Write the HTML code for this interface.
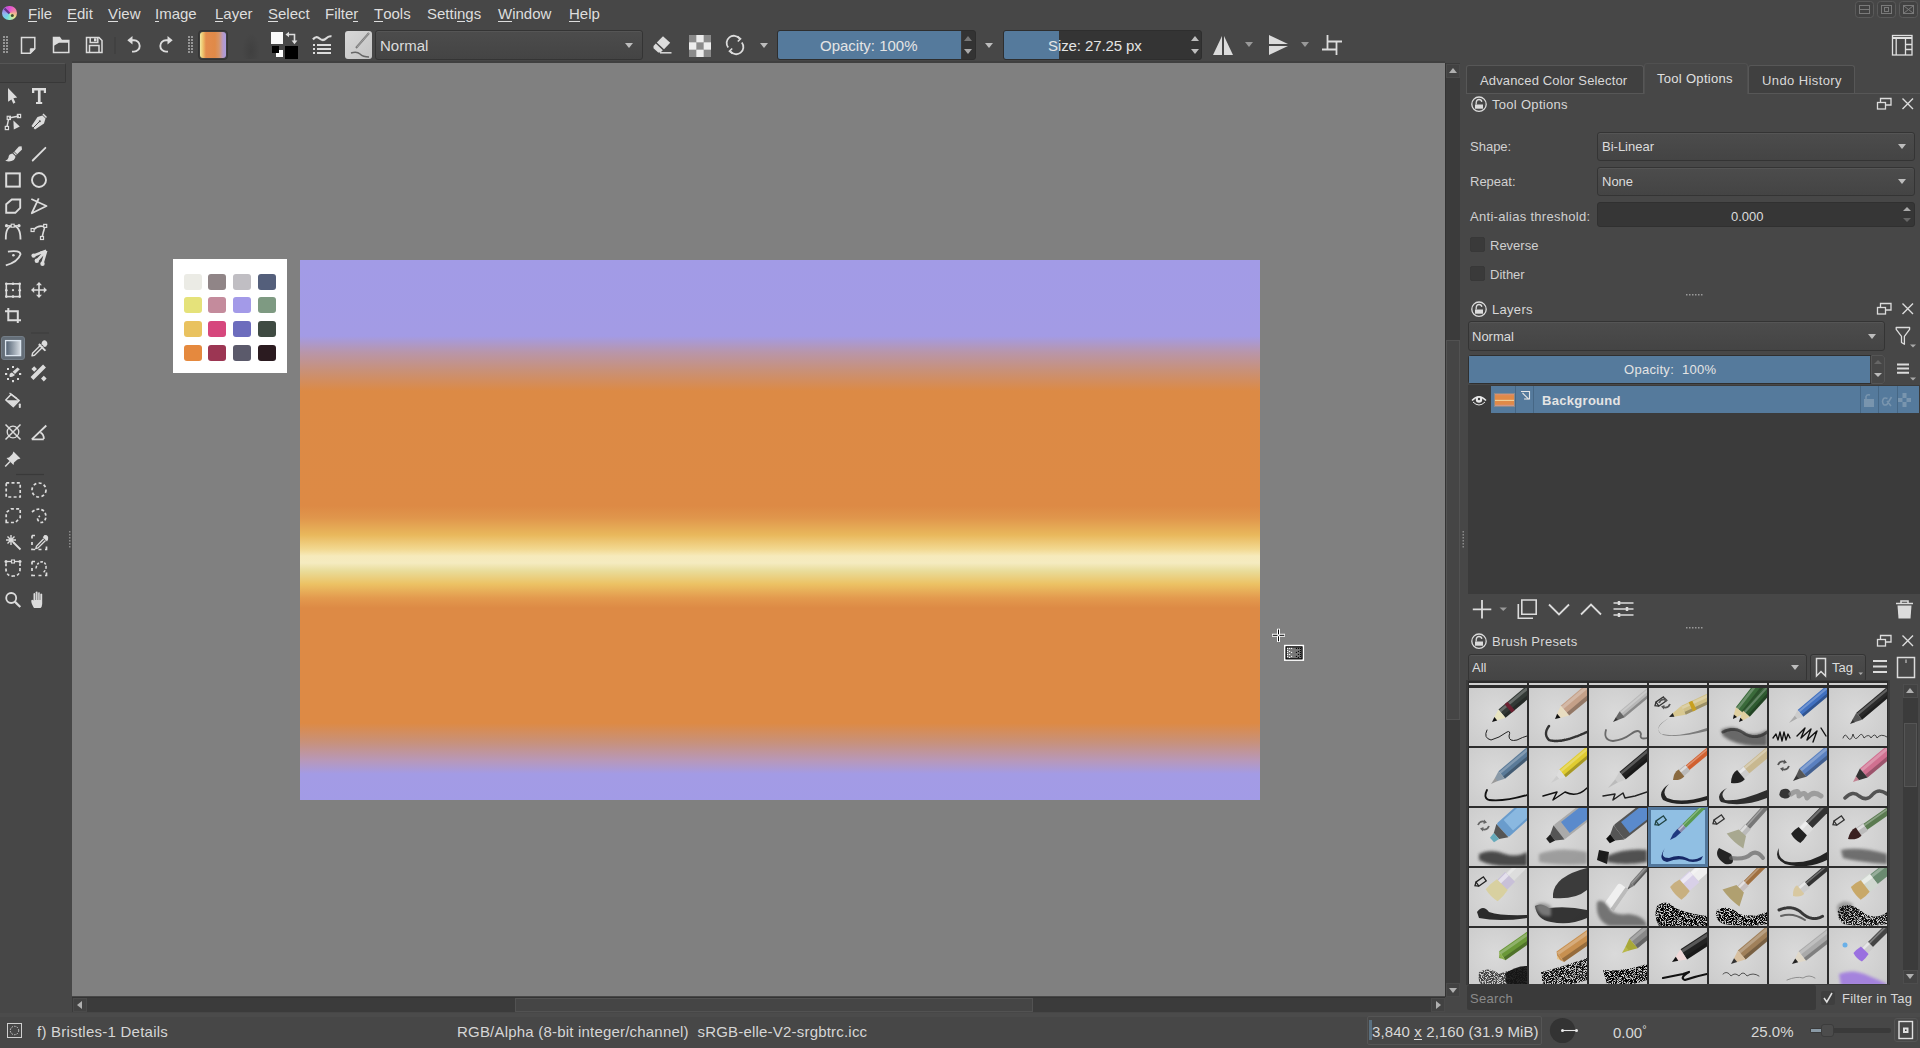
<!DOCTYPE html>
<html><head><meta charset="utf-8">
<style>
*{box-sizing:border-box;margin:0;padding:0}
html,body{width:1920px;height:1048px;overflow:hidden;background:#474747;font-family:"Liberation Sans",sans-serif;color:#d6d6d6;font-size:13px;position:relative}
.a{position:absolute}
.t{position:absolute;white-space:nowrap;line-height:1}
body>svg{position:absolute;overflow:visible}
.mb{font-size:15px;top:6px;color:#dedede}
.mb u{text-decoration:none;border-bottom:1px solid #dedede;display:inline-block;line-height:15px}
#canvas{left:72px;top:63px;width:1373px;height:933px;background:#808080}
#img{left:300px;top:260px;width:960px;height:540px;background:linear-gradient(to bottom,#a29be6 0px,#a39be5 76px,#b896ab 92px,#c8917a 110px,#dc8a45 131px,#dd8a45 246px,#e0964c 258px,#e9b85c 275px,#f2d890 289px,#f6eabb 296px,#f5ebc0 303px,#e9dc9a 311px,#ecc264 324px,#e39a4e 338px,#dd8a45 348px,#dd8a45 463px,#c8917a 482px,#b898b8 500px,#a39be5 514px,#a29be6 540px)}
#palette{left:173px;top:259px;width:114px;height:114px;background:#fff}
.sw{position:absolute;width:18px;height:16px;border-radius:3px}
.combo{position:absolute;border:1px solid #343434;border-radius:3px;background:linear-gradient(#4c4c4c,#444);box-shadow:inset 0 1px 0 #555}
.arrow{position:absolute;width:0;height:0;border-left:4.5px solid transparent;border-right:4.5px solid transparent;border-top:5px solid #bdbdbd}
.arrowu{position:absolute;width:0;height:0;border-left:4.5px solid transparent;border-right:4.5px solid transparent;border-bottom:5px solid #bdbdbd}
</style></head><body>
<!-- CANVAS -->
<div id="canvas" class="a"></div>
<div class="a" style="left:72px;top:61px;width:1373px;height:2px;background:#404040"></div>
<div id="img" class="a"></div>
<div id="palette" class="a">
<div class="sw" style="left:11px;top:15px;background:#ebebe5"></div>
<div class="sw" style="left:35px;top:15px;background:#908587"></div>
<div class="sw" style="left:60px;top:15px;background:#c0bec3"></div>
<div class="sw" style="left:85px;top:15px;background:#545f7b"></div>
<div class="sw" style="left:11px;top:38px;background:#e5e27a"></div>
<div class="sw" style="left:35px;top:38px;background:#c48b9c"></div>
<div class="sw" style="left:60px;top:38px;background:#a39ae8"></div>
<div class="sw" style="left:85px;top:38px;background:#7e9a82"></div>
<div class="sw" style="left:11px;top:62px;background:#e9c25f"></div>
<div class="sw" style="left:35px;top:62px;background:#d6477d"></div>
<div class="sw" style="left:60px;top:62px;background:#6c6cbd"></div>
<div class="sw" style="left:85px;top:62px;background:#3f4b42"></div>
<div class="sw" style="left:11px;top:86px;background:#e5893e"></div>
<div class="sw" style="left:35px;top:86px;background:#9c3653"></div>
<div class="sw" style="left:60px;top:86px;background:#5b5a6b"></div>
<div class="sw" style="left:85px;top:86px;background:#2b1b20"></div>
</div>
<!-- MENUBAR -->
<div class="a" style="left:2px;top:5.5px;width:14.5px;height:14.5px;border-radius:50%;background:conic-gradient(from 0deg,#e050d8,#f07ab0 60deg,#f0b890 100deg,#e8e890 130deg,#90e8c8 180deg,#70d8e8 215deg,#90b8f0 260deg,#9a80e0 300deg,#d050d0 340deg,#e050d8)"></div>
<svg style="left:0;top:0" width="20" height="26" viewBox="0 0 20 26"><path d="M4.5 8.5L9.5 13.5" stroke="#5a2a7a" stroke-width="2.2" opacity="0.85"/><circle cx="12.3" cy="15.5" r="1.5" fill="#1a2a1a" opacity="0.8"/></svg>
<div class="t mb" style="left:28px"><u>F</u>ile</div>
<div class="t mb" style="left:67px"><u>E</u>dit</div>
<div class="t mb" style="left:108px"><u>V</u>iew</div>
<div class="t mb" style="left:155px"><u>I</u>mage</div>
<div class="t mb" style="left:215px"><u>L</u>ayer</div>
<div class="t mb" style="left:268px"><u>S</u>elect</div>
<div class="t mb" style="left:325px">Filte<u>r</u></div>
<div class="t mb" style="left:374px"><u>T</u>ools</div>
<div class="t mb" style="left:427px">Setti<u>n</u>gs</div>
<div class="t mb" style="left:498px"><u>W</u>indow</div>
<div class="t mb" style="left:569px"><u>H</u>elp</div>
<!-- window buttons -->
<svg style="left:1854px;top:0" width="66" height="20" viewBox="0 0 66 20" fill="none" stroke="#5a5a5a">
<rect x="1.5" y="1.5" width="18" height="16" rx="3" fill="#424242"/><rect x="23.5" y="1.5" width="18" height="16" rx="3" fill="#424242"/><rect x="45.5" y="1.5" width="18" height="16" rx="3" fill="#424242"/>
<rect x="5.5" y="5.5" width="10" height="8" stroke="#7a7a7a"/><path d="M5.5 9.5h10" stroke="#7a7a7a"/>
<rect x="27.5" y="5.5" width="10" height="8" stroke="#7a7a7a"/><rect x="30.5" y="7.5" width="4" height="4" stroke="#7a7a7a"/>
<rect x="49.5" y="5.5" width="10" height="8" stroke="#7a7a7a"/><path d="M50 6l9 7M59 6l-9 7" stroke="#7a7a7a"/>
</svg>
<!-- TOOLBAR -->
<svg style="left:0;top:30px" width="380" height="33" viewBox="0 30 380 33" fill="none" stroke="#dcdcdc" stroke-width="1.5">
<g fill="#959595" stroke="none" transform="translate(0,-1)">
<rect x="3" y="37" width="2" height="2"/><rect x="6" y="37" width="2" height="2"/>
<rect x="3" y="40" width="2" height="2"/><rect x="6" y="40" width="2" height="2"/>
<rect x="3" y="43" width="2" height="2"/><rect x="6" y="43" width="2" height="2"/>
<rect x="3" y="46" width="2" height="2"/><rect x="6" y="46" width="2" height="2"/>
<rect x="3" y="49" width="2" height="2"/><rect x="6" y="49" width="2" height="2"/>
<rect x="3" y="52" width="2" height="2"/><rect x="6" y="52" width="2" height="2"/>
<rect x="188" y="37" width="2" height="2"/><rect x="191" y="37" width="2" height="2"/>
<rect x="188" y="40" width="2" height="2"/><rect x="191" y="40" width="2" height="2"/>
<rect x="188" y="43" width="2" height="2"/><rect x="191" y="43" width="2" height="2"/>
<rect x="188" y="46" width="2" height="2"/><rect x="191" y="46" width="2" height="2"/>
<rect x="188" y="49" width="2" height="2"/><rect x="191" y="49" width="2" height="2"/>
<rect x="188" y="52" width="2" height="2"/><rect x="191" y="52" width="2" height="2"/>
</g>
<!-- new -->
<path d="M21.5 37.5H34.8V48.8L30.3 53.2H21.5Z"/><path d="M34.8 48.8H30.3V53.2Z" fill="#dcdcdc" stroke-width="1"/>
<!-- open -->
<path d="M53.5 52.5V37.5H59.5L61.5 40.5H68.8V52.5Z"/><path d="M53.5 37.5H59.5L61.5 40.5H68.8V42.8H59L53.5 46Z" fill="#dcdcdc" stroke="none"/>
<!-- save -->
<path d="M86.5 37.5H99L102 40.5V52.5H86.5Z"/><path d="M90.2 37.8V42.5H97.8V37.8"/><path d="M89.5 52.5V45.5H99V52.5"/><rect x="94" y="38.3" width="2.5" height="3" fill="#dcdcdc" stroke="none"/>
<line x1="115" y1="37" x2="115" y2="54" stroke="#3c3c3c" stroke-width="1"/>
<!-- undo -->
<path d="M131.5 40.2H134A5.7 5.7 0 0 1 134 51.6H132" stroke-width="1.9"/><path d="M127.3 40.2L132.5 36V44.4Z" fill="#dcdcdc" stroke="none"/>
<!-- redo -->
<path d="M168.5 40.2H166A5.7 5.7 0 0 0 166 51.6H168" stroke-width="1.9"/><path d="M172.7 40.2L167.5 36V44.4Z" fill="#dcdcdc" stroke="none"/>
</svg>
<!-- gradient swatch -->
<div class="a" style="left:198px;top:30px;width:30px;height:30px;border:1px solid #343434;border-radius:4px;background:#3d3d3d"></div>
<div class="a" style="left:200px;top:32px;width:26px;height:26px;border-radius:3px;background:linear-gradient(to right,#f3e9a0 0px,#eec06a 3px,#e38b4d 6px,#e08a48 15px,#d79668 19px,#b89ac8 23px,#a99ce0 26px)"></div>
<div class="a" style="left:242px;top:33px;width:18px;height:26px;background:radial-gradient(ellipse at 50% 70%,#404040,#474747 70%)"></div>
<!-- fg/bg -->
<div class="a" style="left:271px;top:32px;width:12px;height:12px;background:#fafafa"></div>
<div class="a" style="left:285px;top:46px;width:13px;height:13px;background:#000"></div>
<div class="a" style="left:276px;top:50px;width:7px;height:7px;background:#fff"></div>
<div class="a" style="left:272px;top:46px;width:7px;height:7px;background:#000;border:1px solid #bbb;border-width:0 0 0 0"></div>
<svg style="left:284px;top:31px" width="16" height="16" viewBox="0 0 16 16" fill="#dcdcdc" stroke="#dcdcdc">
<path d="M1.5 3.5L5 0.8V6.2Z" stroke="none"/><path d="M4.5 3.5H10.5V10" stroke-width="1.6" fill="none"/><path d="M7.6 9.5H13.4L10.5 13.2Z" stroke="none"/>
</svg>
<!-- brush settings -->
<svg style="left:311px;top:33px" width="24" height="24" viewBox="0 0 24 24" fill="none" stroke="#dcdcdc" stroke-width="2">
<path d="M2 6.5Q5 2.5 8.5 5.5T15 5.5T20.5 3.5" stroke-width="2.2"/>
<rect x="2" y="11" width="2" height="2" fill="#dcdcdc" stroke="none"/><rect x="2" y="15" width="2" height="2" fill="#dcdcdc" stroke="none"/><rect x="2" y="19" width="2" height="2" fill="#dcdcdc" stroke="none"/>
<path d="M6 12H20M6 16H20M6 20H20" stroke-width="1.8"/>
</svg>
<!-- brush preset thumb -->
<div class="a" style="left:345px;top:31px;width:27px;height:28px;border-radius:3px;background:linear-gradient(135deg,#d8d8d8,#c4c4c4)"></div>
<svg style="left:345px;top:31px" width="27" height="28" viewBox="0 0 27 28" fill="none">
<path d="M24 2L11 17" stroke="#7a7a7a" stroke-width="2"/><path d="M24 2L12 16" stroke="#aaa" stroke-width="0.8"/>
<path d="M6 22Q12 20 15 23T24 26" stroke="#666" stroke-width="1.4"/>
</svg>
<!-- blend combo -->
<div class="combo" style="left:375px;top:30px;width:268px;height:30px"></div>
<div class="t" style="left:380px;top:38px;font-size:15px;color:#dcdcdc">Normal</div>
<div class="arrow" style="left:625px;top:43px"></div>
<!-- eraser -->
<svg style="left:650px;top:33px" width="26" height="24" viewBox="0 0 26 24">
<path d="M13 3.2L20.2 9.8L14 16.2L6.8 9.6Z" fill="#dcdcdc"/><path d="M5.8 10.6L12.8 17.2L10.5 19.6H8.2L3.5 15.2V13Z" fill="#dcdcdc"/><path d="M10 19.8H21.5" stroke="#dcdcdc" stroke-width="1.5"/>
</svg>
<!-- checker -->
<svg style="left:689px;top:35px" width="22" height="22" viewBox="0 0 21 21">
<rect width="21" height="21" fill="#8a8a8a"/><rect x="7" y="0" width="7" height="7" fill="#ececec"/><rect x="0" y="7" width="7" height="7" fill="#ececec"/><rect x="14" y="7" width="7" height="7" fill="#ececec"/><rect x="7" y="14" width="7" height="7" fill="#ececec"/>
</svg>
<!-- reload -->
<svg style="left:724px;top:34px" width="22" height="22" viewBox="0 0 22 22" fill="none" stroke="#dcdcdc" stroke-width="1.8">
<path d="M4.2 13.5A7.2 7.2 0 0 1 15.5 4.5"/><path d="M17.8 8.5A7.2 7.2 0 0 1 6.5 17.5"/><path d="M13.5 2.5L16.5 4.8L13.8 7.5" stroke-width="1.6"/><path d="M8.5 19.5L5.5 17.2L8.2 14.5" stroke-width="1.6"/>
</svg>
<div class="arrow" style="left:760px;top:43px"></div>
<!-- opacity slider -->
<div class="a" style="left:777px;top:30px;width:199px;height:30px;border:1px solid #2e2e2e;border-radius:3px;background:#333"></div>
<div class="a" style="left:778px;top:31px;width:183px;height:28px;background:#557a9c;border-radius:2px 0 0 2px"></div>
<div class="a" style="left:961px;top:31px;width:1px;height:28px;background:#3a3a3a"></div>
<div class="t" style="left:820px;top:38px;font-size:15px;color:#e4e4e4">Opacity: 100%</div>
<div class="arrowu" style="left:964px;top:36px;border-bottom-color:#777"></div>
<div class="arrow" style="left:964px;top:49px;border-top-color:#aaa"></div>
<div class="arrow" style="left:985px;top:43px"></div>
<!-- size slider -->
<div class="a" style="left:1003px;top:30px;width:199px;height:30px;border:1px solid #2e2e2e;border-radius:3px;background:#343434"></div>
<div class="a" style="left:1004px;top:31px;width:55px;height:28px;background:#557a9c;border-radius:2px 0 0 2px"></div>
<div class="t" style="left:1048px;top:38px;font-size:15px;color:#e4e4e4;letter-spacing:-0.1px">Size: 27.25 px</div>
<div class="arrowu" style="left:1191px;top:36px"></div>
<div class="arrow" style="left:1191px;top:49px"></div>
<!-- mirror -->
<svg style="left:1210px;top:33px" width="140" height="26" viewBox="1210 33 140 26" fill="#dcdcdc">
<path d="M1213 55L1222 36V55Z"/><path d="M1224 36L1233 55H1224Z"/>
<path d="M1269 35L1288 44H1269Z"/><path d="M1269 46H1288L1269 55Z"/>
<path d="M1327.5 35V49.5M1322 49.5H1337M1327.5 41.5H1342M1336.5 41.5V55" fill="none" stroke="#dcdcdc" stroke-width="1.8"/>
</svg>
<div class="arrow" style="left:1245px;top:42px;border-top-color:#999"></div>
<div class="arrow" style="left:1301px;top:42px;border-top-color:#999"></div>
<!-- layout icon -->
<svg style="left:1890px;top:33px" width="24" height="24" viewBox="0 0 24 24" fill="none" stroke="#e0e0e0" stroke-width="1.3">
<rect x="2.5" y="2.5" width="19.5" height="19.5"/><path d="M2.5 5H22" stroke-width="2"/><path d="M6.2 6V22M15.5 6V22M15.5 11.5H22M15.5 16.5H22"/>
</svg>
<!-- TOOLBOX -->
<div class="a" style="left:0;top:63px;width:66px;height:20px;background:#444;border:1px solid #383838;border-left:0;border-top-color:#555;border-radius:0 2px 2px 0"></div>
<div class="a" style="left:1px;top:336px;width:24px;height:24px;background:#646e78;border-radius:3px;border:1px solid #737d87"></div>
<svg style="left:0;top:80px" width="72" height="540" viewBox="0 80 72 540" fill="none" stroke="#dcdcdc" stroke-width="1.6">
<defs><linearGradient id="gg" x1="0" x2="1"><stop offset="0" stop-color="#4f5f70"/><stop offset="1" stop-color="#d7dde3"/></linearGradient></defs>
<!-- select shapes -->
<path d="M8 88L17.2 97.6L13.4 98.2L15.4 102.6L13.3 103.8L11.4 99.6L8.1 101.8Z" fill="#dcdcdc" stroke="none"/>
<!-- text -->
<path d="M32 88H46V93H43.8V90.6H40.6V101.9H42.2V104.1H36V101.9H37.9V90.6H34.3V93H32Z" fill="#dcdcdc" stroke="none"/>
<!-- shape edit -->
<path d="M8.8 118L19 116M8.5 119.5L7 126.5" stroke-width="1.4"/>
<rect x="7.2" y="116.3" width="3.2" height="3.2" stroke-width="1.2"/><rect x="17.4" y="114.4" width="3.2" height="3.2" stroke-width="1.2"/><rect x="5.3" y="126.4" width="3.2" height="3.2" stroke-width="1.2"/>
<path d="M13.4 120.5L19.8 126.5L13.8 129.6Z" fill="#dcdcdc" stroke="none"/>
<!-- calligraphy -->
<path d="M46.5 117.5L43 114" stroke-width="1.5"/>
<path d="M42.5 115.5L45.5 118.5L44 123.5L35 129.5L31.5 126L37.5 117Z" fill="#dcdcdc" stroke="none"/>
<path d="M32.5 128.5L39.2 121.8" stroke="#474747" stroke-width="1"/><circle cx="39.8" cy="121.2" r="1" fill="#474747" stroke="none"/>
<!-- brush -->
<path d="M21.6 146.3L22 149.5L17.2 154.2L14.4 151.4L18.9 146.4Z" fill="#dcdcdc" stroke="none"/>
<path d="M13.6 152.4L16.4 155.2" stroke-width="1.2"/>
<path d="M12.5 153.5Q8.5 154 8.5 157.5Q8 159.8 5.2 160.8Q10 162.5 13.8 160Q16 157.5 15.3 156.3Z" fill="#dcdcdc" stroke="none"/>
<!-- line -->
<path d="M32.7 160.5L45.4 147.8" stroke-width="1.8" stroke-linecap="round"/>
<!-- rect -->
<rect x="6.2" y="173.4" width="13.6" height="13.2" stroke-width="2"/>
<!-- ellipse -->
<circle cx="39" cy="180" r="7" stroke-width="1.9"/>
<!-- polygon -->
<path d="M6.2 212.8V204.2L11.8 199.5H20.2V207.8L15.3 212.8Z" stroke-width="1.9"/>
<!-- polyline -->
<path d="M31.3 199L46.5 206L31.8 213.2L38.7 198.4" stroke-width="1.8" stroke-linejoin="round"/>
<!-- bezier -->
<path d="M5.8 239.5Q5.5 226 12.7 225.9Q20.5 226 20.5 239.5" stroke-width="1.8"/>
<path d="M6.5 225.7H19.5" stroke-width="1.2"/><circle cx="6.5" cy="225.7" r="1.6" fill="#dcdcdc" stroke="none"/><circle cx="19" cy="225.7" r="1.6" fill="#dcdcdc" stroke="none"/><rect x="11.2" y="224.2" width="3" height="3" fill="#474747" stroke-width="1.1"/>
<!-- freehand path -->
<path d="M34 229.5Q38 225 43.8 226.5M44.5 228Q43 233 42.3 236.5" stroke-width="1.6"/>
<rect x="31.1" y="228.5" width="3" height="3" stroke-width="1.2"/><rect x="43.7" y="224.4" width="3" height="3" stroke-width="1.2"/><rect x="40.5" y="236.5" width="3" height="3" stroke-width="1.2"/>
<!-- dynamic brush -->
<path d="M5.8 265.3Q18 262 20.5 254.2Q20 250 7.9 251.6" stroke-width="1.8"/><circle cx="13.4" cy="255.3" r="1.3" fill="#dcdcdc" stroke="none"/>
<!-- multibrush -->
<path d="M46.2 250.6L34.5 255.3M46.2 250.6L37.5 260M46.2 250.6L42.5 263.2" stroke-width="2.6"/>
<path d="M46.2 250.6L40 251.5L45 256Z" fill="#dcdcdc" stroke="none"/>
<circle cx="33.6" cy="255.6" r="2.2" fill="#dcdcdc" stroke="none"/><circle cx="36.8" cy="260.8" r="2.2" fill="#dcdcdc" stroke="none"/><circle cx="42.5" cy="263.8" r="2.2" fill="#dcdcdc" stroke="none"/>
<!-- transform -->
<rect x="6.3" y="283.8" width="13.4" height="12.8" stroke-width="1.6"/>
<g fill="#dcdcdc" stroke="none"><circle cx="6.3" cy="283.8" r="1.3"/><circle cx="13" cy="283.8" r="1.3"/><circle cx="19.7" cy="283.8" r="1.3"/><circle cx="6.3" cy="290.2" r="1.3"/><circle cx="19.7" cy="290.2" r="1.3"/><circle cx="6.3" cy="296.6" r="1.3"/><circle cx="13" cy="296.6" r="1.3"/><circle cx="19.7" cy="296.6" r="1.3"/><circle cx="13" cy="290.2" r="1.1"/></g>
<!-- move -->
<path d="M32 290H46M39 283V297" stroke-width="1.6"/>
<path d="M31 290L34.2 287V293Z M47 290L43.8 287V293Z M39 282L36 285.2H42Z M39 298L36 294.8H42Z" fill="#dcdcdc" stroke="none"/>
<!-- crop -->
<path d="M8.3 308V320.3H21M5 311.3H17.8V323" stroke-width="2"/>
<line x1="31" y1="333" x2="49" y2="333" stroke="#3c3c3c" stroke-width="1"/>
<!-- gradient tool -->
<rect x="5.6" y="340.6" width="15" height="15" fill="url(#gg)" stroke="#dde7f0" stroke-width="1.3"/>
<!-- color picker -->
<path d="M43.3 346.5L34.5 355.3L32 355.8L32.5 353.3L41.3 344.5" stroke-width="1.4" stroke-linejoin="round"/>
<path d="M39.3 343.3L46.2 350.2L44.6 351.3L38.2 344.9Z" fill="#dcdcdc" stroke="none"/>
<path d="M41.5 344Q42 340 45 340.3Q47.8 341.5 47.3 344.5Q46.5 347 44.5 347Z" fill="#dcdcdc" stroke="none"/>
<!-- smart patch -->
<path d="M17.5 367.5L19.8 369.2L15 374L12.6 371.8Z" fill="#dcdcdc" stroke="none"/>
<path d="M12 372.5Q9 373 9.5 376.5Q11.5 378 15 375Z" fill="#dcdcdc" stroke="none"/>
<g fill="#dcdcdc" stroke="none"><rect x="5" y="373" width="2.2" height="2"/><rect x="19" y="373" width="2.2" height="2"/><rect x="12" y="380" width="2" height="2.2"/><rect x="12" y="366" width="2" height="2"/><rect x="7" y="368" width="2" height="2"/><rect x="7" y="378" width="2" height="2"/><rect x="17" y="378" width="2" height="2"/></g>
<!-- colorize -->
<path d="M32 378.5L44.5 366" stroke-width="4"/>
<path d="M34.2 366.2L37 369L34.2 371.8L31.4 369Z M43.8 375.8L46.6 378.6L43.8 381.4L41 378.6Z" fill="#dcdcdc" stroke="none"/>
<!-- fill -->
<path d="M5.8 400L11.2 394.3L19.2 400.6L13.4 406.6Z" stroke-width="1.5" stroke-linejoin="round"/>
<path d="M6.2 400.2H19L13.4 406.2Z" fill="#dcdcdc" stroke="none"/>
<path d="M9.5 393L17 398.5" stroke-width="1.3"/>
<rect x="18.8" y="403.5" width="2" height="4.5" rx="0.8" fill="#dcdcdc" stroke="none"/>
<!-- assistant -->
<circle cx="13" cy="432" r="5.8" stroke-width="1.3"/><path d="M5.5 424.5L20.5 439.5M20.5 424.5L5.5 439.5" stroke-width="1.5"/>
<!-- measure -->
<path d="M31.8 439.3H43.8M31.8 439.3L46.3 425.5M40.5 432.5Q44 434.5 43.8 439" stroke-width="1.8"/>
<!-- pin -->
<path d="M13.5 451.5L20.5 458.5L17.5 459.5L14 462.5L13.5 465L6.5 458L9 457.5L12.5 454Z" fill="#dcdcdc" stroke="none"/>
<path d="M10 461.5L5.2 466.5" stroke-width="1.5"/>
<line x1="16" y1="474.5" x2="44" y2="474.5" stroke="#393939" stroke-width="1.2"/>
<!-- rect select -->
<rect x="6.2" y="482.8" width="14" height="14.2" stroke-width="1.7" stroke-dasharray="3 2.3"/>
<!-- ellipse select -->
<circle cx="39" cy="490" r="7" stroke-width="1.7" stroke-dasharray="3 2.4"/>
<!-- polygon select -->
<path d="M6.2 522.5V512.5L11 508.8H20.2V517.5L15.5 522.5Z" stroke-width="1.7" stroke-dasharray="3 2.3"/>
<!-- freehand select -->
<path d="M32 512Q38 507 44 511Q47.5 516 44.5 521Q41 524 38.5 521Q36 518 40 516" stroke-width="1.7" stroke-dasharray="3 2"/>
<!-- magic wand -->
<path d="M11 535V545M6 540H16M7.5 536.5L14.5 543.5M14.5 536.5L7.5 543.5" stroke-width="1.4"/>
<path d="M13 542L20.5 549.5" stroke-width="1.8"/>
<!-- similar select -->
<path d="M32 535.5H35M32 535.5V538.5M32 542V545M32 548.5V549.5H35M38.5 549.5H41.5M45 549.5H46.5V546.5" stroke-width="1.7"/>
<path d="M45.5 540.5L38 548L35.8 548.6L36.4 546.4L43.7 538.8" stroke-width="1.3"/>
<path d="M42.8 537.2L47 541.4L48 539.5Q49 534.5 44.5 535Z" fill="#dcdcdc" stroke="none"/>
<!-- bezier select -->
<path d="M6 563.2V570Q7 576.5 13 576Q19.5 576 20 570V563.2" stroke-width="1.7" stroke-dasharray="3 2.2"/>
<path d="M6 561.5H20" stroke-width="1.3"/><circle cx="6" cy="561.5" r="1.5" fill="#dcdcdc" stroke="none"/><circle cx="20" cy="561.5" r="1.5" fill="#dcdcdc" stroke="none"/><rect x="11.5" y="560" width="3" height="3" fill="#474747" stroke-width="1.1"/>
<!-- magnetic select -->
<path d="M32 561.5H35M32 561.5V564.5M32 568V571M32 574.5V575.5H35M38.5 575.5H41.5M45 575.5H46.5V572.5" stroke-width="1.7"/>
<path d="M36 568.5Q37 562 42 561.8Q46.5 562.5 46 568Q45 571.5 42.5 573" stroke-width="1.5" stroke-dasharray="2.5 1.5"/>
<!-- zoom -->
<circle cx="11.2" cy="598" r="5" stroke-width="1.8"/><path d="M14.8 601.6L20.3 607" stroke-width="2.2"/>
<!-- pan -->
<path d="M34 608Q31 603 31.3 600.5Q32 598.8 33.5 600.5V593.5Q34.5 592.3 35.6 593.5V592Q36.7 590.8 37.8 592V592.8Q38.9 591.6 40 592.8V594Q41.1 592.8 42.2 594V604Q42 607 40.5 608Z" fill="#dcdcdc" stroke="none"/>
<path d="M35.6 593V600M37.8 592V600M40 593V600" stroke="#474747" stroke-width="0.6"/>
<!-- splitter grip -->
<g fill="#8a8a8a" stroke="none"><rect x="69" y="531" width="1.5" height="1.5"/><rect x="69" y="534" width="1.5" height="1.5"/><rect x="69" y="537" width="1.5" height="1.5"/><rect x="69" y="540" width="1.5" height="1.5"/><rect x="69" y="543" width="1.5" height="1.5"/><rect x="69" y="546" width="1.5" height="1.5"/></g>
</svg>
<!-- CANVAS SCROLLBARS -->
<div class="a" style="left:1445px;top:63px;width:15px;height:934px;background:#3b3b3b;border-left:1px solid #333"></div>
<div class="a" style="left:1446px;top:64px;width:14px;height:14px;background:#424242;border:1px solid #4a4a4a"></div>
<div class="arrowu" style="left:1448.5px;top:68px;border-bottom-color:#b0b0b0"></div>
<div class="a" style="left:1446px;top:340px;width:14px;height:380px;background:#454545;border:1px solid #525252"></div>
<div class="a" style="left:1446px;top:983px;width:14px;height:14px;background:#424242;border:1px solid #4a4a4a"></div>
<div class="arrow" style="left:1448.5px;top:988px;border-top-color:#b0b0b0"></div>
<div class="a" style="left:72px;top:997px;width:1373px;height:15px;background:#3b3b3b;border-top:1px solid #333"></div>
<div class="a" style="left:73px;top:998px;width:14px;height:14px;background:#424242;border:1px solid #4a4a4a"></div>
<div class="a" style="left:77px;top:1000.5px;width:0;height:0;border-top:4.5px solid transparent;border-bottom:4.5px solid transparent;border-right:5px solid #b0b0b0"></div>
<div class="a" style="left:515px;top:998px;width:518px;height:14px;background:#454545;border:1px solid #525252"></div>
<div class="a" style="left:1431px;top:998px;width:14px;height:14px;background:#424242;border:1px solid #4a4a4a"></div>
<div class="a" style="left:1436px;top:1000.5px;width:0;height:0;border-top:4.5px solid transparent;border-bottom:4.5px solid transparent;border-left:5px solid #b0b0b0"></div>
<div class="a" style="left:0;top:1013px;width:1920px;height:4px;background:#4b4b4b"></div>
<!-- DOCK splitter grip -->
<svg style="left:1460px;top:530px" width="6" height="20" viewBox="0 0 6 20"><g fill="#8a8a8a"><rect x="2.5" y="1" width="1.5" height="1.5"/><rect x="2.5" y="4" width="1.5" height="1.5"/><rect x="2.5" y="7" width="1.5" height="1.5"/><rect x="2.5" y="10" width="1.5" height="1.5"/><rect x="2.5" y="13" width="1.5" height="1.5"/><rect x="2.5" y="16" width="1.5" height="1.5"/></g></svg>
<!-- TABS -->
<div class="a" style="left:1466px;top:65px;width:178px;height:28px;background:#404040;border:1px solid #575757;border-bottom:0;border-radius:3px 3px 0 0"></div>
<div class="t" style="left:1480px;top:74px;font-size:13px;letter-spacing:0.15px;color:#d8d8d8">Advanced Color Selector</div>
<div class="a" style="left:1644px;top:63px;width:104px;height:31px;background:#474747;border:1px solid #505050;border-bottom:0;border-radius:3px 3px 0 0"></div>
<div class="t" style="left:1657px;top:72px;font-size:13px;letter-spacing:0.3px;color:#e0e0e0">Tool Options</div>
<div class="a" style="left:1748px;top:65px;width:107px;height:28px;background:#404040;border:1px solid #575757;border-bottom:0;border-radius:3px 3px 0 0"></div>
<div class="t" style="left:1762px;top:74px;font-size:13px;letter-spacing:0.4px;color:#d8d8d8">Undo History</div>
<div class="a" style="left:1466px;top:93px;width:178px;height:1px;background:#575757"></div>
<div class="a" style="left:1748px;top:93px;width:172px;height:1px;background:#575757"></div>
<!-- dock title icons -->
<svg style="left:1466px;top:94px" width="454" height="560" viewBox="1466 94 454 560" fill="none" stroke="#dcdcdc" stroke-width="1.3">
<g id="ttl">
<circle cx="1479" cy="104.2" r="7.2"/><rect x="1475" y="104.5" width="8" height="4.2" fill="#dcdcdc" stroke="none"/><path d="M1476.2 104.5V102.5Q1476.5 99.5 1479 99.5Q1481.5 99.5 1481.8 101.8"/>
<rect x="1877.5" y="102.5" width="8" height="6.5"/><path d="M1880.5 102.5V98.5H1891V105H1885.5"/>
<path d="M1902.5 98.5L1913 109M1913 98.5L1902.5 109" stroke-width="1.4"/>
</g>
<use href="#ttl" y="205"/>
<use href="#ttl" y="537"/>
</svg>
<div class="t" style="left:1492px;top:98px;font-size:13px;letter-spacing:0.3px;color:#d8d8d8">Tool Options</div>
<!-- tool options -->
<div class="t" style="left:1470px;top:140px;font-size:13px;color:#d0d0d0">Shape:</div>
<div class="t" style="left:1470px;top:175px;font-size:13px;color:#d0d0d0">Repeat:</div>
<div class="t" style="left:1470px;top:210px;font-size:13px;letter-spacing:0.3px;color:#d0d0d0">Anti-alias threshold:</div>
<div class="combo" style="left:1597px;top:132px;width:318px;height:29px"></div>
<div class="t" style="left:1602px;top:140px;font-size:13px;color:#dcdcdc">Bi-Linear</div>
<div class="arrow" style="left:1898px;top:144px"></div>
<div class="combo" style="left:1597px;top:167px;width:318px;height:29px"></div>
<div class="t" style="left:1602px;top:175px;font-size:13px;color:#dcdcdc">None</div>
<div class="arrow" style="left:1898px;top:179px"></div>
<div class="a" style="left:1597px;top:202px;width:318px;height:25px;background:#363636;border:1px solid #303030;border-radius:3px"></div>
<div class="t" style="left:1731px;top:210px;font-size:13px;color:#dcdcdc">0.000</div>
<div class="arrowu" style="left:1903px;top:207px;border-bottom-color:#aaa;border-left-width:4px;border-right-width:4px;border-bottom-width:4px"></div>
<div class="arrow" style="left:1903px;top:218px;border-top-color:#666;border-left-width:4px;border-right-width:4px;border-top-width:4px"></div>
<div class="a" style="left:1470px;top:237px;width:15px;height:15px;background:#3a3a3a;border:1px solid #383838;border-radius:2px"></div>
<div class="t" style="left:1490px;top:239px;font-size:13px;color:#d0d0d0">Reverse</div>
<div class="a" style="left:1470px;top:266px;width:15px;height:15px;background:#3a3a3a;border:1px solid #383838;border-radius:2px"></div>
<div class="t" style="left:1490px;top:268px;font-size:13px;color:#d0d0d0">Dither</div>
<svg style="left:1684px;top:293px" width="20" height="4" viewBox="0 0 20 4"><g fill="#9a9a9a"><rect x="2" y="1" width="1.5" height="1.5"/><rect x="5" y="1" width="1.5" height="1.5"/><rect x="8" y="1" width="1.5" height="1.5"/><rect x="11" y="1" width="1.5" height="1.5"/><rect x="14" y="1" width="1.5" height="1.5"/><rect x="17" y="1" width="1.5" height="1.5"/></g></svg>
<!-- LAYERS -->
<div class="t" style="left:1492px;top:303px;font-size:13px;letter-spacing:0.3px;color:#d8d8d8">Layers</div>
<div class="combo" style="left:1468px;top:321px;width:417px;height:30px"></div>
<div class="t" style="left:1472px;top:330px;font-size:13px;color:#dcdcdc">Normal</div>
<div class="arrow" style="left:1868px;top:334px"></div>
<svg style="left:1893px;top:326px" width="26" height="26" viewBox="0 0 26 26" fill="none" stroke="#dcdcdc" stroke-width="1.4">
<path d="M3.2 1.5H16.6V3.3L11.4 10.3V18.3L8.5 16.5V10.3L3.2 3.3Z" stroke-linejoin="round" stroke-width="1.3"/><path d="M17 18.5H23L20 21.5Z" fill="#aaa" stroke="none"/>
</svg>
<div class="a" style="left:1468px;top:355px;width:417px;height:29px;background:#3b3b3b;border:1px solid #2f2f2f;border-radius:3px"></div>
<div class="a" style="left:1469px;top:356px;width:401px;height:27px;background:#557a9c"></div>
<div class="t" style="left:1624px;top:363px;font-size:13px;letter-spacing:0.3px;color:#e4e4e4">Opacity:&nbsp; 100%</div>
<div class="a" style="left:1871px;top:355px;width:14px;height:29px;background:#474747;border:1px solid #555;border-radius:0 3px 3px 0"></div>
<div class="arrowu" style="left:1873.5px;top:360px;border-bottom-color:#666;border-left-width:4px;border-right-width:4px;border-bottom-width:4px"></div>
<div class="arrow" style="left:1873.5px;top:373px;border-top-color:#bbb;border-left-width:4px;border-right-width:4px;border-top-width:4px"></div>
<svg style="left:1893px;top:360px" width="26" height="24" viewBox="0 0 26 24" fill="none" stroke="#dcdcdc" stroke-width="1.8">
<path d="M4 4.5H16M4 8.5H16M4 12.8H16" stroke-width="2"/><path d="M17 17.5H23L20 20.5Z" fill="#aaa" stroke="none"/>
</svg>
<!-- layer list -->
<div class="a" style="left:1468px;top:385px;width:452px;height:209px;background:#3b3b3b"></div>
<div class="a" style="left:1491px;top:386px;width:428px;height:27px;background:#557a9c"></div>
<div class="a" style="left:1515px;top:386px;width:1px;height:27px;background:#466785"></div>
<div class="a" style="left:1533px;top:386px;width:1px;height:27px;background:#466785"></div>
<div class="a" style="left:1860px;top:386px;width:1px;height:27px;background:#466785"></div>
<div class="a" style="left:1878px;top:386px;width:1px;height:27px;background:#466785"></div>
<div class="a" style="left:1897px;top:386px;width:1px;height:27px;background:#466785"></div>
<div class="a" style="left:1494px;top:393px;width:21px;height:14px;background:linear-gradient(#d8907a 0,#e08a48 15%,#e08a48 45%,#f6e6b0 52%,#e08a48 60%,#e08a48 85%,#c89aa0 100%);border:1px solid #8a8a8a"></div>
<svg style="left:1470px;top:390px" width="450" height="22" viewBox="1470 390 450 22" fill="none">
<path d="M1472 400.5Q1479 393 1486 400.5" stroke="#e8e8e8" stroke-width="1.4"/><path d="M1473 402Q1479 408 1485 402" stroke="#e8e8e8" stroke-width="1"/>
<circle cx="1479" cy="399.5" r="3.2" fill="#e8e8e8"/><circle cx="1479" cy="399" r="1.2" fill="#3b3b3b"/>
<path d="M1521 391.5H1529.5V399.5" stroke="#e6e6e6" stroke-width="1.1"/><path d="M1522.5 393L1528.5 399" stroke="#e6e6e6" stroke-width="1.1"/><path d="M1524 399H1529" stroke="#e6e6e6" stroke-width="1.1"/>
<rect x="1864" y="399" width="10" height="8" fill="#7995ae"/><path d="M1866 399V396.5Q1867 394 1870 395" stroke="#7995ae" stroke-width="1.5"/>
<path d="M1887.5 398.5Q1883 396.5 1882.5 401.5Q1883 406.5 1887 404.5L1891.5 397M1887 401L1891 406" stroke="#7995ae" stroke-width="1.6"/>
<path d="M1904.5 393V407M1898 400H1911" stroke="#7995ae" stroke-width="4"/><rect x="1902.5" y="398" width="4" height="4" fill="#557a9c"/>
</svg>
<div class="t" style="left:1542px;top:394px;font-size:13px;font-weight:bold;letter-spacing:0.3px;color:#e4e4e4">Background</div>
<!-- layer buttons -->
<svg style="left:1466px;top:594px" width="454" height="30" viewBox="1466 594 454 30" fill="none" stroke="#dcdcdc" stroke-width="1.8">
<path d="M1482 600V618.5M1472.8 609.3H1491.3"/>
<path d="M1499.5 607.5H1507L1503.25 611Z" fill="#9a9a9a" stroke="none"/>
<path d="M1521.8 600H1536.2V614.2H1521.8Z" stroke-width="1.6"/><path d="M1518.3 604V618.2H1533" stroke-width="1.6"/>
<path d="M1549 604.5L1559 614.5L1569 604.5"/>
<path d="M1581 614.5L1591 604.5L1601 614.5"/>
<path d="M1613.5 603H1633.5M1613.5 609H1633.5M1613.5 615H1633.5" stroke-width="1.5"/>
<path d="M1619 601V605M1627 607V611M1619 613V617" stroke-width="2.5"/>
<path d="M1896 603.5H1913M1901 603.5V601H1908V603.5" stroke-width="1.6"/><path d="M1897.5 605.5H1911.5L1910.5 618.5H1898.5Z" fill="#dcdcdc" stroke="none"/>
</svg>
<svg style="left:1684px;top:626px" width="20" height="4" viewBox="0 0 20 4"><g fill="#9a9a9a"><rect x="2" y="1" width="1.5" height="1.5"/><rect x="5" y="1" width="1.5" height="1.5"/><rect x="8" y="1" width="1.5" height="1.5"/><rect x="11" y="1" width="1.5" height="1.5"/><rect x="14" y="1" width="1.5" height="1.5"/><rect x="17" y="1" width="1.5" height="1.5"/></g></svg>
<!-- BRUSH PRESETS -->
<div class="t" style="left:1492px;top:635px;font-size:13px;letter-spacing:0.3px;color:#d8d8d8">Brush Presets</div>
<div class="combo" style="left:1468px;top:654px;width:339px;height:28px"></div>
<div class="t" style="left:1472px;top:661px;font-size:13px;color:#dcdcdc">All</div>
<div class="arrow" style="left:1791px;top:665px"></div>
<div class="combo" style="left:1810px;top:654px;width:56px;height:28px"></div>
<svg style="left:1810px;top:654px" width="110" height="30" viewBox="1810 654 110 30" fill="none" stroke="#dcdcdc" stroke-width="1.5">
<path d="M1816.5 658.5H1825.5V676L1821 671.5L1816.5 676Z"/>
<path d="M1858.5 672.5H1863L1860.75 675Z" fill="#aaa" stroke="none"/>
<path d="M1873 661H1887M1873 666.5H1887M1873 672H1887" stroke-width="1.8"/>
<rect x="1897.5" y="657.5" width="17" height="20"/><path d="M1906 659.5V663" stroke-width="1"/>
</svg>
<div class="t" style="left:1832px;top:661px;font-size:13px;color:#dcdcdc">Tag</div>
<!-- TILES -->
<svg style="left:1466px;top:680px" width="424" height="305" viewBox="1466 680 424 305">
<defs><radialGradient id="tg" cx="0.45" cy="0.45" r="0.7"><stop offset="0" stop-color="#dadada"/><stop offset="1" stop-color="#cbcbcb"/></radialGradient>
<filter id="bl" x="-20%" y="-20%" width="140%" height="140%"><feGaussianBlur stdDeviation="1.5"/></filter>
<filter id="gr" x="0" y="0" width="100%" height="100%"><feTurbulence type="fractalNoise" baseFrequency="1.4" numOctaves="2" seed="5" result="n"/><feColorMatrix in="n" type="matrix" values="0 0 0 0 0  0 0 0 0 0  0 0 0 0 0  0 0 0 6 -2.3" result="m"/><feComposite in="SourceGraphic" in2="m" operator="in"/></filter>
<clipPath id="tc"><rect x="0" y="0" width="58" height="58"/></clipPath></defs>
<rect x="1466" y="680" width="424" height="305" fill="#3b3b3b"/><rect x="1468" y="681" width="420" height="303" fill="#2c2c2c"/>
<rect x="1469" y="683" width="58" height="2" fill="#cfcfcf"/>
<rect x="1529" y="683" width="58" height="2" fill="#cfcfcf"/>
<rect x="1589" y="683" width="58" height="2" fill="#cfcfcf"/>
<rect x="1649" y="683" width="58" height="2" fill="#cfcfcf"/>
<rect x="1709" y="683" width="58" height="2" fill="#cfcfcf"/>
<rect x="1769" y="683" width="58" height="2" fill="#cfcfcf"/>
<rect x="1829" y="683" width="58" height="2" fill="#cfcfcf"/>
<g transform="translate(1469,688)"><svg x="0" y="0" width="58" height="58" viewBox="0 0 58 58" overflow="hidden"><rect width="58" height="58" fill="url(#tg)"/><g transform="translate(23,34) rotate(-40)"><rect x="13" y="-5.5" width="60" height="11" fill="#333a36"/><rect x="13" y="-4.5" width="60" height="2.8" fill="#ffffff" opacity="0.25"/><rect x="13" y="2.2" width="60" height="3.3" fill="#000" opacity="0.25"/><rect x="21" y="-5.5" width="4" height="11" fill="#6a2030"/><path d="M4.5 -1.98L13 -5.5V5.5L4.5 1.98Z" fill="#e8e4c0"/><path d="M0 0L5 -2.2V2.2Z" fill="#111"/></g><path d="M18 42Q14 50 22 52Q30 50 38 44Q42 42 40 48Q40 54 48 52Q54 49 58 48" fill="none" stroke="#222" stroke-width="1.0" stroke-linecap="round" stroke-linejoin="round" opacity="1" /></svg></g>
<g transform="translate(1529,688)"><svg x="0" y="0" width="58" height="58" viewBox="0 0 58 58" overflow="hidden"><rect width="58" height="58" fill="url(#tg)"/><g transform="translate(26,31) rotate(-40)"><rect x="13" y="-6.5" width="60" height="13" fill="#c4a088"/><rect x="13" y="-5.5" width="60" height="3.2" fill="#ffffff" opacity="0.25"/><rect x="13" y="2.6" width="60" height="3.9" fill="#000" opacity="0.25"/><path d="M4.5 -2.34L13 -6.5V6.5L4.5 2.34Z" fill="#e8dcc0"/><path d="M0 0L5 -2.6V2.6Z" fill="#111"/></g><path d="M20 38Q14 46 20 52Q32 56 58 44" fill="none" stroke="#333" stroke-width="2.4" stroke-linecap="round" stroke-linejoin="round" opacity="1" stroke-dasharray="1.6 0.5"/></svg></g>
<g transform="translate(1589,688)"><svg x="0" y="0" width="58" height="58" viewBox="0 0 58 58" overflow="hidden"><rect width="58" height="58" fill="url(#tg)"/><g transform="translate(24,34) rotate(-40)"><rect x="12" y="-4.0" width="60" height="8" fill="#b8b8b8"/><rect x="12" y="-3.0" width="60" height="2.0" fill="#fff" opacity="0.25"/><rect x="12" y="1.6" width="60" height="2.4" fill="#000" opacity="0.25"/><path d="M4.5 -1.44L12 -4.0V4.0L4.5 1.44Z" fill="#666"/><path d="M0 0L5 -1.6V1.6Z" fill="#333"/></g><path d="M17 42Q14 52 24 53Q34 52 42 46Q50 40 52 46Q50 52 58 50" fill="none" stroke="#6a6a6a" stroke-width="1.8" stroke-linecap="round" stroke-linejoin="round" opacity="1" /></svg></g>
<g transform="translate(1649,688)"><svg x="0" y="0" width="58" height="58" viewBox="0 0 58 58" overflow="hidden"><rect width="58" height="58" fill="url(#tg)"/><g transform="translate(20,29) rotate(-25)"><rect x="16" y="-5.0" width="60" height="10" fill="#d0c088"/><rect x="16" y="-4.0" width="60" height="2.5" fill="#ffffff" opacity="0.25"/><rect x="16" y="2.0" width="60" height="3.0" fill="#000" opacity="0.25"/><rect x="24" y="-5.0" width="4" height="10" fill="#c8a020"/><path d="M4.5 -1.7999999999999998L16 -5.0V5.0L4.5 1.7999999999999998Z" fill="#d8c890"/><path d="M0 0L5 -2.0V2.0Z" fill="#222"/></g><path d="M20 30Q4 40 12 46Q30 50 58 40V43Q30 50 14 47Q2 40 20 30Z" fill="#666" opacity="0.8"/><g transform="translate(7,14) rotate(-35)"><rect x="0" y="0" width="9" height="5" fill="none" stroke="#333" stroke-width="1.3"/><path d="M0 0L-3 2.5L0 5" fill="none" stroke="#333" stroke-width="1.3"/></g><g fill="none" stroke="#555" stroke-width="1.8"><path d="M10 15Q12 10 17 12"/><path d="M21 16Q19 21 14 19"/></g><path d="M16 9.5L19 12.5L15.5 14Z M15 21.5L12 18.5L15.5 17Z" fill="#555"/></svg></g>
<g transform="translate(1709,688)"><svg x="0" y="0" width="58" height="58" viewBox="0 0 58 58" overflow="hidden"><rect width="58" height="58" fill="url(#tg)"/><g transform="translate(24,31) rotate(-52)"><rect x="11" y="-5.0" width="60" height="10" fill="#3a6a3a"/><rect x="11" y="-4.0" width="60" height="2.5" fill="#ffffff" opacity="0.25"/><rect x="11" y="2.0" width="60" height="3.0" fill="#000" opacity="0.25"/><path d="M3.6 -1.7999999999999998L11 -5.0V5.0L3.6 1.7999999999999998Z" fill="#e0d0a0"/><path d="M0 0L4 -2.0V2.0Z" fill="#111"/></g><g transform="translate(30,34) rotate(-48)"><rect x="11" y="-4.5" width="60" height="9" fill="#2e5a30"/><rect x="11" y="-3.5" width="60" height="2.2" fill="#ffffff" opacity="0.25"/><rect x="11" y="1.8" width="60" height="2.7" fill="#000" opacity="0.25"/><path d="M3.6 -1.6199999999999999L11 -4.5V4.5L3.6 1.6199999999999999Z" fill="#e0d0a0"/><path d="M0 0L4 -1.8V1.8Z" fill="#111"/></g><path d="M12 42Q24 36 34 44Q46 50 58 42V58H44Q24 56 14 48Z" fill="#444" opacity="0.75" filter="url(#bl)"/><path d="M14 44Q26 38 36 46Q48 52 58 44" fill="none" stroke="#222" stroke-width="3" stroke-linecap="round" stroke-linejoin="round" opacity="0.6" stroke-dasharray="1 1"/></svg></g>
<g transform="translate(1769,688)"><svg x="0" y="0" width="58" height="58" viewBox="0 0 58 58" overflow="hidden"><rect width="58" height="58" fill="url(#tg)"/><g transform="translate(20,35) rotate(-40)"><rect x="15" y="-4.5" width="60" height="9" fill="#4070c0"/><rect x="15" y="-3.5" width="60" height="2.2" fill="#ffffff" opacity="0.25"/><rect x="15" y="1.8" width="60" height="2.7" fill="#000" opacity="0.25"/><path d="M8.1 -1.6199999999999999L15 -4.5V4.5L8.1 1.6199999999999999Z" fill="#ccc"/><path d="M0 0L9 -1.8V1.8Z" fill="#aaa"/></g><path d="M4 50L7 46L9 52L11 44L13 53L15 44L17 52L19 46L21 50" fill="none" stroke="#111" stroke-width="1.3" stroke-linecap="round" stroke-linejoin="round" opacity="1" /><path d="M28 48L36 40L32 50L42 41L38 52L48 43L44 54M52 40L57 48" fill="none" stroke="#111" stroke-width="1.4" stroke-linecap="round" stroke-linejoin="round" opacity="1" /></svg></g>
<g transform="translate(1829,688)"><svg x="0" y="0" width="58" height="58" viewBox="0 0 58 58" overflow="hidden"><rect width="58" height="58" fill="url(#tg)"/><g transform="translate(21,36) rotate(-40)"><rect x="12" y="-4.5" width="60" height="9" fill="#2a2a2a"/><rect x="12" y="-3.5" width="60" height="2.2" fill="#ffffff" opacity="0.25"/><rect x="12" y="1.8" width="60" height="2.7" fill="#000" opacity="0.25"/><path d="M4.5 -1.6199999999999999L12 -4.5V4.5L4.5 1.6199999999999999Z" fill="#555"/><path d="M0 0L5 -1.8V1.8Z" fill="#333"/></g><path d="M14 50Q16 44 19 50Q22 54 24 46Q26 54 30 48Q33 44 35 50Q40 45 42 50Q46 44 48 50Q52 45 58 49" fill="none" stroke="#333" stroke-width="0.9" stroke-linecap="round" stroke-linejoin="round" opacity="1" /></svg></g>
<g transform="translate(1469,748)"><svg x="0" y="0" width="58" height="58" viewBox="0 0 58 58" overflow="hidden"><rect width="58" height="58" fill="url(#tg)"/><g transform="translate(22,36) rotate(-40)"><rect x="14" y="-5.0" width="60" height="10" fill="#5a7a98"/><rect x="14" y="-4.0" width="60" height="2.5" fill="#ffffff" opacity="0.25"/><rect x="14" y="2.0" width="60" height="3.0" fill="#000" opacity="0.25"/><path d="M6.3 -1.7999999999999998L14 -5.0V5.0L6.3 1.7999999999999998Z" fill="#8a9aa8"/><path d="M0 0L7 -2.0V2.0Z" fill="#999"/></g><path d="M18 42Q14 50 20 52Q34 54 58 47" fill="none" stroke="#111" stroke-width="1.8" stroke-linecap="round" stroke-linejoin="round" opacity="1" /></svg></g>
<g transform="translate(1529,748)"><svg x="0" y="0" width="58" height="58" viewBox="0 0 58 58" overflow="hidden"><rect width="58" height="58" fill="url(#tg)"/><g transform="translate(22,35) rotate(-40)"><rect x="15" y="-5.0" width="60" height="10" fill="#e0cc30"/><rect x="15" y="-4.0" width="60" height="2.5" fill="#ffffff" opacity="0.25"/><rect x="15" y="2.0" width="60" height="3.0" fill="#000" opacity="0.25"/><path d="M8.1 -1.7999999999999998L15 -5.0V5.0L8.1 1.7999999999999998Z" fill="#ddd"/><path d="M0 0L9 -2.0V2.0Z" fill="#ccc"/></g><path d="M14 48L28 44L24 52L36 44Q48 50 58 40" fill="none" stroke="#111" stroke-width="1.5" stroke-linecap="round" stroke-linejoin="round" opacity="1" /></svg></g>
<g transform="translate(1589,748)"><svg x="0" y="0" width="58" height="58" viewBox="0 0 58 58" overflow="hidden"><rect width="58" height="58" fill="url(#tg)"/><g transform="translate(19,40) rotate(-40)"><rect x="19" y="-5.0" width="60" height="10" fill="#222"/><rect x="19" y="-4.0" width="60" height="2.5" fill="#ffffff" opacity="0.25"/><rect x="19" y="2.0" width="60" height="3.0" fill="#000" opacity="0.25"/><path d="M9.9 -1.7999999999999998L19 -5.0V5.0L9.9 1.7999999999999998Z" fill="#ccc"/><path d="M0 0L11 -2.0V2.0Z" fill="#bbb"/></g><path d="M14 48L26 46L24 52L34 45L36 50L46 48Q52 46 58 44" fill="none" stroke="#222" stroke-width="1.5" stroke-linecap="round" stroke-linejoin="round" opacity="1" /></svg></g>
<g transform="translate(1649,748)"><svg x="0" y="0" width="58" height="58" viewBox="0 0 58 58" overflow="hidden"><rect width="58" height="58" fill="url(#tg)"/><g transform="translate(24,32) rotate(-40)"><rect x="19" y="-3.0" width="60" height="6" fill="#d06030"/><rect x="19" y="-2.2" width="60" height="1.5" fill="#fff" opacity="0.3"/><rect x="10" y="-4.0" width="9" height="8" fill="#bbb"/><rect x="10" y="-3.0" width="9" height="2.4" fill="#fff" opacity="0.5"/><path d="M0 0Q5.5 -5.3999999999999995 11 -4.5V4.5Q5.5 5.3999999999999995 0 0Z" fill="#8a6a40"/></g><path d="M20 36Q12 44 18 50Q32 56 58 48V52Q30 60 14 52Q8 44 20 36Z" fill="#111" opacity="0.9"/></svg></g>
<g transform="translate(1709,748)"><svg x="0" y="0" width="58" height="58" viewBox="0 0 58 58" overflow="hidden"><rect width="58" height="58" fill="url(#tg)"/><g transform="translate(22,35) rotate(-40)"><rect x="20" y="-4.5" width="60" height="9" fill="#c8b890"/><rect x="20" y="-3.7" width="60" height="2.2" fill="#fff" opacity="0.3"/><rect x="12" y="-5.0" width="8" height="10" fill="#ccc"/><rect x="12" y="-4.0" width="8" height="3.0" fill="#fff" opacity="0.5"/><path d="M0 0Q6.5 -7.199999999999999 13 -6.0V6.0Q6.5 7.199999999999999 0 0Z" fill="#222"/></g><path d="M18 40Q10 46 16 52Q30 54 58 42V50Q32 60 12 54Q6 46 18 40Z" fill="#111" opacity="0.85"/></svg></g>
<g transform="translate(1769,748)"><svg x="0" y="0" width="58" height="58" viewBox="0 0 58 58" overflow="hidden"><rect width="58" height="58" fill="url(#tg)"/><g transform="translate(24,33) rotate(-40)"><rect x="13" y="-5.5" width="60" height="11" fill="#5a80c0"/><rect x="13" y="-4.5" width="60" height="2.8" fill="#ffffff" opacity="0.25"/><rect x="13" y="2.2" width="60" height="3.3" fill="#000" opacity="0.25"/><path d="M5.4 -1.98L13 -5.5V5.5L5.4 1.98Z" fill="#555"/><path d="M0 0L6 -2.2V2.2Z" fill="#333"/></g><g fill="none" stroke="#555" stroke-width="1.8"><path d="M9 17Q11 12 16 14"/><path d="M20 18Q18 23 13 21"/></g><path d="M15 11.5L18 14.5L14.5 16Z M14 23.5L11 20.5L14.5 19Z" fill="#555"/><path d="M12 42Q20 38 22 46Q20 52 14 50Q8 48 12 42Z" fill="#222" opacity="0.9"/><path d="M22 46Q30 40 30 48Q36 42 38 50Q44 42 52 48" fill="none" stroke="#888" stroke-width="5" stroke-linecap="round" stroke-linejoin="round" opacity="0.7" /></svg></g>
<g transform="translate(1829,748)"><svg x="0" y="0" width="58" height="58" viewBox="0 0 58 58" overflow="hidden"><rect width="58" height="58" fill="url(#tg)"/><g transform="translate(24,34) rotate(-40)"><rect x="14" y="-6.0" width="60" height="12" fill="#d07090"/><rect x="14" y="-5.0" width="60" height="3.0" fill="#ffffff" opacity="0.25"/><rect x="14" y="2.4" width="60" height="3.6" fill="#000" opacity="0.25"/><path d="M5.4 -2.16L14 -6.0V6.0L5.4 2.16Z" fill="#333"/><path d="M0 0L6 -2.4000000000000004V2.4000000000000004Z" fill="#c08090"/></g><path d="M16 50Q24 42 30 48Q38 54 44 46Q50 40 58 46" fill="none" stroke="#333" stroke-width="3.5" stroke-linecap="round" stroke-linejoin="round" opacity="0.8" /></svg></g>
<g transform="translate(1469,808)"><svg x="0" y="0" width="58" height="58" viewBox="0 0 58 58" overflow="hidden"><rect width="58" height="58" fill="url(#tg)"/><g transform="translate(23,32) rotate(-42)"><rect x="14" y="-9.0" width="60" height="18" rx="2" fill="#6a9ccc"/><rect x="22" y="-7.0" width="40" height="14" fill="#8ab8e0"/><path d="M6 -4L14 -9.0V9.0L6 4Z" fill="#555"/><path d="M0 -3L6 -4V4L0 3Z" fill="#6ab"/></g><g fill="none" stroke="#666" stroke-width="1.8"><path d="M9 17Q11 12 16 14"/><path d="M20 18Q18 23 13 21"/></g><path d="M15 11.5L18 14.5L14.5 16Z M14 23.5L11 20.5L14.5 19Z" fill="#666"/><path d="M10 46Q22 40 36 46Q48 50 58 44V58H40Q20 58 10 52Z" fill="#333" opacity="0.85" filter="url(#bl)"/></svg></g>
<g transform="translate(1529,808)"><svg x="0" y="0" width="58" height="58" viewBox="0 0 58 58" overflow="hidden"><rect width="58" height="58" fill="url(#tg)"/><g transform="translate(19,33) rotate(-38)"><rect x="14" y="-9.0" width="60" height="18" rx="2" fill="#aaa"/><rect x="22" y="-7.0" width="40" height="14" fill="#5a8acc"/><path d="M6 -4L14 -9.0V9.0L6 4Z" fill="#555"/><path d="M0 -3L6 -4V4L0 3Z" fill="#222"/></g><path d="M10 46Q30 38 58 44V56Q30 58 10 54Z" fill="#888" opacity="0.7" filter="url(#bl)"/></svg></g>
<g transform="translate(1589,808)"><svg x="0" y="0" width="58" height="58" viewBox="0 0 58 58" overflow="hidden"><rect width="58" height="58" fill="url(#tg)"/><g transform="translate(19,33) rotate(-38)"><rect x="14" y="-9.0" width="60" height="18" rx="2" fill="#555"/><rect x="22" y="-7.0" width="40" height="14" fill="#5a8acc"/><path d="M6 -4L14 -9.0V9.0L6 4Z" fill="#555"/><path d="M0 -3L6 -4V4L0 3Z" fill="#111"/></g><path d="M10 42L20 44L18 56L8 52Z" fill="#111" opacity="0.95"/><path d="M18 48Q36 40 58 42V54Q36 58 18 54Z" fill="#333" opacity="0.8" filter="url(#bl)"/></svg></g>
<rect x="1648" y="807" width="60" height="60" fill="#52779c"/>
<rect x="1651" y="810" width="54" height="54" fill="#90bfe3"/>
<g transform="translate(1649,808)" clip-path="url(#tc)"><g transform="translate(21,32) rotate(-45)"><rect x="20" y="-2.5" width="60" height="5" fill="#5a9a50"/><rect x="20" y="-1.7" width="60" height="1.2" fill="#fff" opacity="0.3"/><rect x="12" y="-2.5" width="8" height="5" fill="#88a"/><rect x="12" y="-1.5" width="8" height="1.5" fill="#fff" opacity="0.5"/><path d="M0 0Q6.5 -3.0 13 -2.5V2.5Q6.5 3.0 0 0Z" fill="#203a80"/></g><path d="M16 40Q10 50 20 50Q30 46 38 50Q44 54 54 48L52 52Q44 56 36 52Q28 50 18 54Q8 52 16 40Z" fill="#102060" opacity="0.95"/><g transform="translate(7,13) rotate(-35)"><rect x="0" y="0" width="9" height="5" fill="none" stroke="#244" stroke-width="1.3"/><path d="M0 0L-3 2.5L0 5" fill="none" stroke="#244" stroke-width="1.3"/></g></g>
<g transform="translate(1709,808)"><svg x="0" y="0" width="58" height="58" viewBox="0 0 58 58" overflow="hidden"><rect width="58" height="58" fill="url(#tg)"/><g transform="translate(26,33) rotate(-48)"><rect x="19" y="-3.0" width="60" height="6" fill="#777"/><rect x="19" y="-2.2" width="60" height="1.5" fill="#fff" opacity="0.3"/><rect x="10" y="-4.0" width="9" height="8" fill="#bbb"/><rect x="10" y="-3.0" width="9" height="2.4" fill="#fff" opacity="0.5"/><path d="M0 -11.200000000000001L11 -4.8999999999999995V4.8999999999999995L0 11.200000000000001Q-2 0 0 -11.200000000000001Z" fill="#a8a890"/></g><g transform="translate(5,12) rotate(-35)"><rect x="0" y="0" width="9" height="5" fill="none" stroke="#333" stroke-width="1.3"/><path d="M0 0L-3 2.5L0 5" fill="none" stroke="#333" stroke-width="1.3"/></g><path d="M10 40Q4 48 16 56Q28 58 22 46Z" fill="#111" opacity="0.9"/><path d="M22 50Q36 52 42 46Q48 42 54 50" fill="none" stroke="#666" stroke-width="4" stroke-linecap="round" stroke-linejoin="round" opacity="0.7" /></svg></g>
<g transform="translate(1769,808)"><svg x="0" y="0" width="58" height="58" viewBox="0 0 58 58" overflow="hidden"><rect width="58" height="58" fill="url(#tg)"/><g transform="translate(26,31) rotate(-45)"><rect x="20" y="-4.5" width="60" height="9" fill="#333"/><rect x="20" y="-3.7" width="60" height="2.2" fill="#fff" opacity="0.3"/><rect x="10" y="-6.0" width="10" height="12" fill="#ddd"/><rect x="10" y="-5.0" width="10" height="3.6" fill="#fff" opacity="0.5"/><path d="M1 -6.5Q5.5 -7.15 11 -5.8500000000000005V5.8500000000000005Q5.5 7.15 1 6.5Q-1 0 1 -6.5Z" fill="#222"/></g><path d="M10 40Q8 52 20 54Q40 56 58 44V52Q38 62 16 56Q4 50 10 40Z" fill="#111" opacity="0.9"/></svg></g>
<g transform="translate(1829,808)"><svg x="0" y="0" width="58" height="58" viewBox="0 0 58 58" overflow="hidden"><rect width="58" height="58" fill="url(#tg)"/><g transform="translate(19,31) rotate(-35)"><rect x="21" y="-3.5" width="60" height="7" fill="#5a7a50"/><rect x="21" y="-2.7" width="60" height="1.8" fill="#fff" opacity="0.3"/><rect x="12" y="-4.5" width="9" height="9" fill="#bbb"/><rect x="12" y="-3.5" width="9" height="2.7" fill="#fff" opacity="0.5"/><path d="M0 0Q6.5 -6.0 13 -5.0V5.0Q6.5 6.0 0 0Z" fill="#3a2020"/></g><g transform="translate(5,13) rotate(-35)"><rect x="0" y="0" width="9" height="5" fill="none" stroke="#333" stroke-width="1.3"/><path d="M0 0L-3 2.5L0 5" fill="none" stroke="#333" stroke-width="1.3"/></g><path d="M12 42Q30 38 58 46V56Q30 54 14 50Z" fill="#444" opacity="0.7" filter="url(#bl)"/></svg></g>
<g transform="translate(1469,868)"><svg x="0" y="0" width="58" height="58" viewBox="0 0 58 58" overflow="hidden"><rect width="58" height="58" fill="url(#tg)"/><g transform="translate(22,28) rotate(-45)"><rect x="27" y="-5.5" width="60" height="11" fill="#ddd"/><rect x="27" y="-4.7" width="60" height="2.8" fill="#fff" opacity="0.3"/><rect x="15" y="-7.0" width="12" height="14" fill="#c8c0d8"/><rect x="15" y="-6.0" width="12" height="4.2" fill="#fff" opacity="0.5"/><path d="M1 -8.5Q8.0 -9.350000000000001 16 -7.65V7.65Q8.0 9.350000000000001 1 8.5Q-1 0 1 -8.5Z" fill="#d8d0a0"/></g><g transform="translate(7,14) rotate(-35)"><rect x="0" y="0" width="9" height="5" fill="none" stroke="#222" stroke-width="1.3"/><path d="M0 0L-3 2.5L0 5" fill="none" stroke="#222" stroke-width="1.3"/></g><path d="M8 44Q14 36 20 44Q32 48 58 47V50Q30 54 10 50Z" fill="#222" opacity="0.95"/></svg></g>
<g transform="translate(1529,868)"><svg x="0" y="0" width="58" height="58" viewBox="0 0 58 58" overflow="hidden"><rect width="58" height="58" fill="url(#tg)"/><path d="M24 26Q26 8 58 0V22Q46 32 24 30Z" fill="#333" opacity="0.95"/><path d="M6 38Q12 34 20 40Q40 38 58 42V50Q40 58 22 54Q8 52 6 38Z" fill="#222" opacity="0.9"/><path d="M6 38Q12 32 22 38L22 48Q10 50 6 38Z" fill="#888" opacity="0.8" filter="url(#bl)"/></svg></g>
<g transform="translate(1589,868)"><svg x="0" y="0" width="58" height="58" viewBox="0 0 58 58" overflow="hidden"><rect width="58" height="58" fill="url(#tg)"/><g transform="translate(38,22) rotate(-48)"><rect x="8" y="-2.5" width="60" height="5" fill="#777"/><rect x="8" y="-1.5" width="60" height="1.2" fill="#ffffff" opacity="0.25"/><rect x="8" y="1.0" width="60" height="1.5" fill="#000" opacity="0.25"/><path d="M3.6 -0.8999999999999999L8 -2.5V2.5L3.6 0.8999999999999999Z" fill="#777"/><path d="M0 0L4 -1.0V1.0Z" fill="#555"/></g><g transform="translate(28,28) rotate(-55)"><rect x="-14" y="-6" width="26" height="12" rx="3" fill="#f0f0f0"/><rect x="-14" y="2" width="26" height="4" fill="#bbb"/></g><path d="M8 34Q14 30 20 40Q24 48 40 46Q56 48 58 58H20Q6 52 8 34Z" fill="#555" opacity="0.75" filter="url(#bl)"/></svg></g>
<g transform="translate(1649,868)"><svg x="0" y="0" width="58" height="58" viewBox="0 0 58 58" overflow="hidden"><rect width="58" height="58" fill="url(#tg)"/><g transform="translate(26,26) rotate(-42)"><rect x="26" y="-6.0" width="60" height="12" fill="#eee"/><rect x="26" y="-5.2" width="60" height="3.0" fill="#fff" opacity="0.3"/><rect x="12" y="-7.5" width="14" height="15" fill="#d8d0e8"/><rect x="12" y="-6.5" width="14" height="4.5" fill="#fff" opacity="0.5"/><path d="M1 -8.5Q6.5 -9.350000000000001 13 -7.65V7.65Q6.5 9.350000000000001 1 8.5Q-1 0 1 -8.5Z" fill="#c8b080"/></g><path d="M8 38Q18 30 26 40Q40 46 58 48V58H10Q4 48 8 38Z" fill="#000" opacity="1" filter="url(#gr)"/></svg></g>
<g transform="translate(1709,868)"><svg x="0" y="0" width="58" height="58" viewBox="0 0 58 58" overflow="hidden"><rect width="58" height="58" fill="url(#tg)"/><g transform="translate(22,30) rotate(-45)"><rect x="21" y="-3.0" width="60" height="6" fill="#a07040"/><rect x="21" y="-2.2" width="60" height="1.5" fill="#fff" opacity="0.3"/><rect x="12" y="-4.0" width="9" height="8" fill="#c8c0c0"/><rect x="12" y="-3.0" width="9" height="2.4" fill="#fff" opacity="0.5"/><path d="M0 -12.0L13 -5.25V5.25L0 12.0Q-2 0 0 -12.0Z" fill="#b0a070"/></g><path d="M8 42Q20 36 30 46Q44 50 58 44V56Q40 60 14 56Q4 50 8 42Z" fill="#000" opacity="1" filter="url(#gr)"/></svg></g>
<g transform="translate(1769,868)"><svg x="0" y="0" width="58" height="58" viewBox="0 0 58 58" overflow="hidden"><rect width="58" height="58" fill="url(#tg)"/><g transform="translate(24,28) rotate(-40)"><rect x="18" y="-3.0" width="60" height="6" fill="#333"/><rect x="18" y="-2.2" width="60" height="1.5" fill="#fff" opacity="0.3"/><rect x="9" y="-4.5" width="9" height="9" fill="#ccc"/><rect x="9" y="-3.5" width="9" height="2.7" fill="#fff" opacity="0.5"/><path d="M0 0Q5.0 -6.6 10 -5.5V5.5Q5.0 6.6 0 0Z" fill="#d8c8a0"/></g><path d="M10 42Q24 36 34 46Q44 54 54 48" fill="none" stroke="#111" stroke-width="3" stroke-linecap="round" stroke-linejoin="round" opacity="0.8" stroke-dasharray="2 1"/><path d="M12 48Q24 44 36 52" fill="none" stroke="#333" stroke-width="2" stroke-linecap="round" stroke-linejoin="round" opacity="0.7" /></svg></g>
<g transform="translate(1829,868)"><svg x="0" y="0" width="58" height="58" viewBox="0 0 58 58" overflow="hidden"><rect width="58" height="58" fill="url(#tg)"/><g transform="translate(26,26) rotate(-38)"><rect x="24" y="-6.0" width="60" height="12" fill="#6a8a70"/><rect x="24" y="-5.2" width="60" height="3.0" fill="#fff" opacity="0.3"/><rect x="12" y="-7.5" width="12" height="15" fill="#d0d8d0"/><rect x="12" y="-6.5" width="12" height="4.5" fill="#fff" opacity="0.5"/><path d="M1 -8.0Q6.5 -8.8 13 -7.2V7.2Q6.5 8.8 1 8.0Q-1 0 1 -8.0Z" fill="#c8a868"/></g><path d="M8 38Q14 30 24 36L20 50Q8 50 8 38Z" fill="#777" opacity="0.6" filter="url(#bl)"/><path d="M10 40Q20 32 36 46Q48 52 58 44V56Q36 60 14 56Q6 48 10 40Z" fill="#111" opacity="1" filter="url(#gr)"/></svg></g>
<g transform="translate(1469,928)"><svg x="0" y="0" width="58" height="56" viewBox="0 0 58 56" overflow="hidden"><rect width="58" height="58" fill="url(#tg)"/><g transform="translate(30,30) rotate(-35)"><rect x="4" y="-5.5" width="60" height="11" fill="#6a9838"/><rect x="4" y="-4.5" width="60" height="2.8" fill="#ffffff" opacity="0.25"/><rect x="4" y="2.2" width="60" height="3.3" fill="#000" opacity="0.25"/><path d="M1.8 -1.98L4 -5.5V5.5L1.8 1.98Z" fill="#88b048"/><path d="M0 0L2 -2.2V2.2Z" fill="#7aa040"/></g><path d="M10 44Q20 38 30 46Q40 42 58 38V58H14Q8 54 10 44Z" fill="#333" opacity="0.9" filter="url(#gr)"/><path d="M36 46Q46 38 58 38V58H38Z" fill="#111" opacity="0.9"/></svg></g>
<g transform="translate(1529,928)"><svg x="0" y="0" width="58" height="56" viewBox="0 0 58 56" overflow="hidden"><rect width="58" height="58" fill="url(#tg)"/><g transform="translate(28,31) rotate(-35)"><rect x="4" y="-6.5" width="60" height="13" fill="#c89050"/><rect x="4" y="-5.5" width="60" height="3.2" fill="#ffffff" opacity="0.25"/><rect x="4" y="2.6" width="60" height="3.9" fill="#000" opacity="0.25"/><path d="M1.8 -2.34L4 -6.5V6.5L1.8 2.34Z" fill="#c89050"/><path d="M0 0L2 -2.6V2.6Z" fill="#e8c890"/></g><path d="M12 44Q30 40 58 30V52Q34 60 14 58Z" fill="#111" opacity="1" filter="url(#gr)"/></svg></g>
<g transform="translate(1589,928)"><svg x="0" y="0" width="58" height="56" viewBox="0 0 58 56" overflow="hidden"><rect width="58" height="58" fill="url(#tg)"/><g transform="translate(33,25) rotate(-40)"><rect x="15" y="-6.5" width="60" height="13" fill="#888"/><rect x="15" y="-5.5" width="60" height="3.2" fill="#ffffff" opacity="0.25"/><rect x="15" y="2.6" width="60" height="3.9" fill="#000" opacity="0.25"/><path d="M6.3 -2.34L15 -6.5V6.5L6.3 2.34Z" fill="#a8a838"/><path d="M0 0L7 -2.6V2.6Z" fill="#b8b848"/></g><path d="M14 42Q34 44 58 36V52Q36 60 18 56Z" fill="#000" opacity="1" filter="url(#gr)"/></svg></g>
<g transform="translate(1649,928)"><svg x="0" y="0" width="58" height="56" viewBox="0 0 58 56" overflow="hidden"><rect width="58" height="58" fill="url(#tg)"/><g transform="translate(23,34) rotate(-33)"><rect x="14" y="-6.0" width="60" height="12" fill="#222"/><rect x="14" y="-5.0" width="60" height="3.0" fill="#ffffff" opacity="0.25"/><rect x="14" y="2.4" width="60" height="3.6" fill="#000" opacity="0.25"/><path d="M5.4 -2.16L14 -6.0V6.0L5.4 2.16Z" fill="#f0d8d8"/><path d="M0 0L6 -2.4000000000000004V2.4000000000000004Z" fill="#111"/></g><path d="M14 50Q24 48 34 46L40 44Q30 50 36 52Q48 48 58 46" fill="none" stroke="#111" stroke-width="2.2" stroke-linecap="round" stroke-linejoin="round" opacity="1" /></svg></g>
<g transform="translate(1709,928)"><svg x="0" y="0" width="58" height="56" viewBox="0 0 58 56" overflow="hidden"><rect width="58" height="58" fill="url(#tg)"/><g transform="translate(22,36) rotate(-40)"><rect x="14" y="-6.0" width="60" height="12" fill="#a0805a"/><rect x="14" y="-5.0" width="60" height="3.0" fill="#ffffff" opacity="0.25"/><rect x="14" y="2.4" width="60" height="3.6" fill="#000" opacity="0.25"/><path d="M5.4 -2.16L14 -6.0V6.0L5.4 2.16Z" fill="#d8c0a0"/><path d="M0 0L6 -2.4000000000000004V2.4000000000000004Z" fill="#333"/></g><path d="M14 46Q18 42 22 48Q26 44 30 48Q34 42 38 48Q44 44 50 48" fill="none" stroke="#444" stroke-width="0.9" stroke-linecap="round" stroke-linejoin="round" opacity="1" /></svg></g>
<g transform="translate(1769,928)"><svg x="0" y="0" width="58" height="56" viewBox="0 0 58 56" overflow="hidden"><rect width="58" height="58" fill="url(#tg)"/><g transform="translate(23,36) rotate(-38)"><rect x="13" y="-6.0" width="60" height="12" fill="#aaa"/><rect x="13" y="-5.0" width="60" height="3.0" fill="#ffffff" opacity="0.25"/><rect x="13" y="2.4" width="60" height="3.6" fill="#000" opacity="0.25"/><path d="M5.4 -2.16L13 -6.0V6.0L5.4 2.16Z" fill="#e0d8c8"/><path d="M0 0L6 -2.4000000000000004V2.4000000000000004Z" fill="#222"/></g><path d="M18 52Q28 48 34 50Q40 46 46 50" fill="none" stroke="#888" stroke-width="0.9" stroke-linecap="round" stroke-linejoin="round" opacity="1" /></svg></g>
<g transform="translate(1829,928)"><svg x="0" y="0" width="58" height="56" viewBox="0 0 58 56" overflow="hidden"><rect width="58" height="58" fill="url(#tg)"/><g transform="translate(28,30) rotate(-45)"><rect x="19" y="-3.5" width="60" height="7" fill="#444"/><rect x="19" y="-2.7" width="60" height="1.8" fill="#fff" opacity="0.3"/><rect x="10" y="-4.5" width="9" height="9" fill="#ccc"/><rect x="10" y="-3.5" width="9" height="2.7" fill="#fff" opacity="0.5"/><path d="M1 -6.0Q5.5 -6.6000000000000005 11 -5.4V5.4Q5.5 6.6000000000000005 1 6.0Q-1 0 1 -6.0Z" fill="#9a70e0"/></g><path d="M10 46Q24 40 40 48Q50 52 58 56V58H12Z" fill="#9a70e0" opacity="0.8" filter="url(#bl)"/><circle cx="16" cy="17" r="2.5" fill="#6ab0e8"/></svg></g>
</svg>
<!-- preset scrollbar -->
<div class="a" style="left:1903px;top:684px;width:15px;height:300px;background:#3b3b3b"></div>
<div class="a" style="left:1903px;top:684px;width:15px;height:14px;background:#424242;border:1px solid #4d4d4d"></div>
<div class="arrowu" style="left:1906px;top:688px;border-bottom-color:#b0b0b0"></div>
<div class="a" style="left:1904px;top:723px;width:13px;height:64px;background:#454545;border:1px solid #555"></div>
<div class="a" style="left:1903px;top:970px;width:15px;height:14px;background:#424242;border:1px solid #4d4d4d"></div>
<div class="arrow" style="left:1906px;top:974px;border-top-color:#b0b0b0"></div>
<!-- search -->
<div class="a" style="left:1467px;top:985px;width:349px;height:25px;background:#3a3a3a;border-radius:2px"></div>
<div class="t" style="left:1470px;top:992px;font-size:13px;color:#8a8a8a;letter-spacing:0.3px">Search</div>
<svg style="left:1820px;top:990px" width="16" height="16" viewBox="0 0 16 16"><rect x="1" y="1" width="14" height="14" rx="2" fill="#3f3f3f"/><path d="M4 8L6.8 12L12 3" fill="none" stroke="#e0e0e0" stroke-width="1.5"/></svg>
<div class="t" style="left:1842px;top:992px;font-size:13px;color:#d8d8d8;letter-spacing:0.25px">Filter in Tag</div>
<!-- STATUS BAR -->
<svg style="left:6px;top:1022px" width="18" height="18" viewBox="0 0 18 18" fill="none" stroke="#cfcfcf" stroke-width="1">
<rect x="1.5" y="1.5" width="14" height="14"/><circle cx="8.5" cy="8.5" r="4.2" stroke-dasharray="1.5 1.2"/>
</svg>
<div class="t" style="left:37px;top:1024px;font-size:15px;letter-spacing:0.25px;color:#d6d6d6">f) Bristles-1 Details</div>
<div class="t" style="left:457px;top:1024px;font-size:15px;letter-spacing:0.2px;color:#d6d6d6">RGB/Alpha (8-bit integer/channel)&nbsp; sRGB-elle-V2-srgbtrc.icc</div>
<div class="a" style="left:1367px;top:1016px;width:175px;height:29px;border:1px solid #555;border-radius:2px;background:#474747"></div>
<div class="a" style="left:1369px;top:1020px;width:3px;height:20px;background:#5a7080"></div>
<div class="t" style="left:1372px;top:1024px;font-size:15px;letter-spacing:0.1px;color:#d8d8d8">3,840 <u style="text-decoration:none;border-bottom:1px solid #ddd;line-height:14px;display:inline-block">x</u> 2,160 (31.9 MiB)</div>
<svg style="left:1548px;top:1015px" width="34" height="34" viewBox="0 0 34 34"><circle cx="14.5" cy="15.5" r="12.6" fill="#333"/><path d="M14.5 15.5H28.5" stroke="#e8e8e8" stroke-width="1.1"/><circle cx="14.5" cy="15.5" r="1.5" fill="#e8e8e8"/><circle cx="28.5" cy="15.5" r="1.5" fill="#e8e8e8"/></svg>
<div class="t" style="left:1613px;top:1024px;font-size:15px;color:#d8d8d8">0.00<span style="font-size:11px;vertical-align:5px">°</span></div>
<div class="t" style="left:1751px;top:1024px;font-size:15px;color:#d8d8d8">25.0%</div>
<div class="a" style="left:1810px;top:1028px;width:81px;height:5px;background:#3a3a3a;border-radius:2px"></div>
<div class="a" style="left:1811px;top:1029px;width:12px;height:3px;background:#8a9aa6"></div>
<div class="a" style="left:1821px;top:1024px;width:13px;height:13px;background:#4c4c4c;border:1px solid #3c3c3c;border-radius:3px"></div>
<div class="a" style="left:1894px;top:1018px;width:24px;height:24px;background:#474747;border:1px solid #555;border-radius:3px"></div>
<svg style="left:1894px;top:1018px" width="24" height="24" viewBox="0 0 24 24" fill="none" stroke="#e0e0e0" stroke-width="1.4"><rect x="5" y="3.5" width="13.5" height="17"/><rect x="9" y="9.5" width="5.5" height="5.5" fill="#e0e0e0" stroke="none"/><rect x="11" y="11.5" width="1.5" height="1.5" fill="#333" stroke="none"/></svg>
<!-- canvas cursor -->
<svg style="left:1270px;top:627px" width="40" height="36" viewBox="0 0 40 36">
<path d="M8.5 1.8V15M2 8.3H15" stroke="#fff" stroke-width="3"/>
<path d="M8.5 2.5V7.3M8.5 9.3V14.3M2.7 8.3H7.5M9.5 8.3H14.3" stroke="#000" stroke-width="1"/>
<rect x="14.8" y="18.6" width="18.5" height="14.5" fill="#777" stroke="#fff" stroke-width="1.6"/>
<rect x="16.1" y="19.9" width="15.9" height="11.9" fill="none" stroke="#000" stroke-width="1.1"/>
<g fill="#fff"><circle cx="17.6" cy="21.4" r="0.6"/><circle cx="19.6" cy="21.4" r="0.6"/><circle cx="21.6" cy="21.4" r="0.6"/><circle cx="17.6" cy="23.4" r="0.6"/><circle cx="19.6" cy="24.4" r="0.6"/><circle cx="17.6" cy="25.4" r="0.6"/><circle cx="21.6" cy="25.4" r="0.6"/><circle cx="17.6" cy="27.4" r="0.6"/><circle cx="19.6" cy="27.4" r="0.6"/><circle cx="17.6" cy="29.4" r="0.6"/><circle cx="21.6" cy="29.4" r="0.6"/><circle cx="19.6" cy="30.4" r="0.6"/></g>
<g fill="#000"><circle cx="26.4" cy="21.4" r="0.6"/><circle cx="28.4" cy="21.4" r="0.6"/><circle cx="30.4" cy="21.4" r="0.6"/><circle cx="30.4" cy="23.4" r="0.6"/><circle cx="28.4" cy="24.4" r="0.6"/><circle cx="26.4" cy="25.4" r="0.6"/><circle cx="30.4" cy="25.4" r="0.6"/><circle cx="28.4" cy="27.4" r="0.6"/><circle cx="30.4" cy="27.4" r="0.6"/><circle cx="26.4" cy="29.4" r="0.6"/><circle cx="30.4" cy="29.4" r="0.6"/><circle cx="28.4" cy="30.4" r="0.6"/></g>
</svg>
</body></html>
